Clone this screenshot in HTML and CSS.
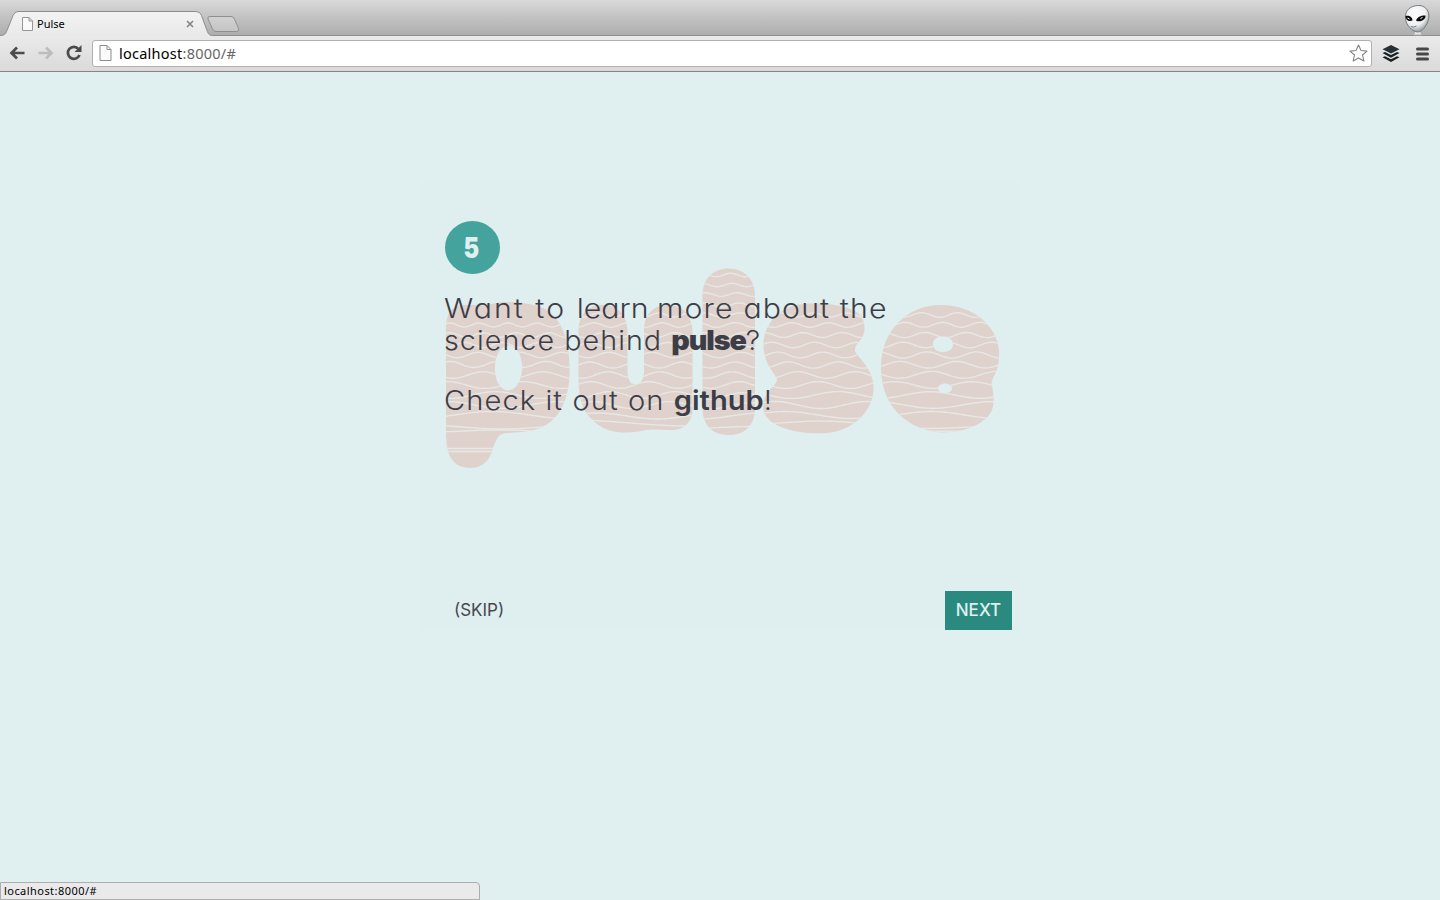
FILE: index.html
```html
<!DOCTYPE html>
<html lang="en">
<head>
<meta charset="utf-8">
<title>Pulse</title>
<link rel="stylesheet" href="styles.css">
</head>
<body>
<div class="browser">
  <header class="tabstrip">
    <div class="tabs">
      <svg class="tab-shapes" width="250" height="36" viewBox="0 0 250 36">
        <defs>
          <linearGradient id="tabfill" x1="0" y1="0" x2="0" y2="1"><stop offset="0" stop-color="#f3f3f3"/><stop offset="1" stop-color="#e9e9e9"/></linearGradient>
          <linearGradient id="newfill" x1="0" y1="0" x2="0" y2="1"><stop offset="0" stop-color="#d2d2d2"/><stop offset="1" stop-color="#c4c4c4"/></linearGradient>
        </defs>
        <path d="M0 35.5C5 35.5 6 33 7 30.500L13 15.500Q14.500 11.500 18 11.500H196Q200 11.500 201.500 15.500L207 30.500C208 33.500 209 35.500 213 35.500V36H0Z" fill="url(#tabfill)"/>
        <path d="M0 35.5C5 35.5 6 33 7 30.500L13 15.500Q14.500 11.500 18 11.500H196Q200 11.500 201.500 15.500L207 30.500C208 33.500 209 35.500 213 35.500H250" fill="none" stroke="#8d8d8d"/>
        <path d="M210 16.500H231Q233.500 16.500 234.500 19L238.500 28.500Q239.500 31.500 236.500 31.500H216Q213.500 31.500 212.500 29L208 19Q207 16.500 210 16.500Z" fill="url(#newfill)" stroke="#8f8f8f"/>
      </svg>
      <div class="tab">
        <svg width="11" height="14" viewBox="0 0 11 14"><path d="M.5.5H7L10.500 4V13.500H.5ZM7 .5V4H10.500" fill="#fafafa" stroke="#969696"/></svg>
        <span class="tab-title">Pulse</span>
        <svg width="8" height="8" viewBox="0 0 8 8"><path d="M1 1L7 7M7 1L1 7" stroke="#818181" stroke-width="1.500"/></svg>
      </div>
    </div>
    <svg class="alien" width="28" height="32" viewBox="0 0 28 32">
      <defs><radialGradient id="skin" cx=".4" cy=".3" r=".7"><stop offset="0" stop-color="#fff"/><stop offset=".65" stop-color="#edf0f1"/><stop offset="1" stop-color="#969c9f"/></radialGradient></defs>
      <path d="M11 27L9.500 31H18L16 26Z" fill="#e4e8e9" stroke="#aaa"/>
      <path d="M13.500 1.500C20.500 1 25 6 25 12C25 19 18.500 28 14 28C8.500 28 1.500 21 1.500 14C1 6 6.500 2 13.500 1.500Z" fill="url(#skin)" stroke="#777b7d"/>
      <path d="M1.500 12C5 11 8.500 13 8.500 16.500C5 18 1.500 16 1.500 12ZM12 16.500C13 13 18 11 21.500 11.500C22 15.500 16.500 19 12 16.500Z" fill="#0b0d0d"/>
      <path d="M3.500 14L5.500 15M16.500 14.500L18.500 13.500" stroke="#fff"/>
      <path d="M7 22.500Q9.500 24 12.500 22" fill="none" stroke="#68878e"/>
    </svg>
  </header>
  <nav class="toolbar">
    <svg class="back" width="16" height="14" viewBox="0 0 16 14"><path d="M8 1.500L2.500 7L8 12.500M2.500 7H15.500" fill="none" stroke="#4b4b4b" stroke-width="2.700"/></svg>
    <svg class="forward" width="16" height="14" viewBox="0 0 16 14"><path d="M8 1.500L13.500 7L8 12.500M13.500 7H.5" fill="none" stroke="#bdbdbd" stroke-width="2.700"/></svg>
    <svg class="reload" width="16" height="16" viewBox="0 0 16 16"><path d="M12.500 4A6 6 0 1 0 13.500 10" fill="none" stroke="#4b4b4b" stroke-width="2.700"/><path d="M15.500 0V7H8.500Z" fill="#4b4b4b"/></svg>
    <div class="address">
      <svg width="13" height="16" viewBox="0 0 13 16"><path d="M1 .5H8L12 4.500V15.500H1ZM8 .5V4.500H12" fill="#fafafa" stroke="#8c8c8c"/></svg>
      <span class="url"><span class="host">localhost</span>:8000/#</span>
      <svg width="19" height="18" viewBox="0 0 19 18"><path d="M9.500 1L12 6.500L18 7.100L13.500 11L14.900 17L9.500 13.900L4.100 17L5.500 11L1 7.100L7 6.500Z" fill="#fff" stroke="#858585" stroke-width="1.100" stroke-linejoin="round"/></svg>
    </div>
    <svg class="layers" width="18" height="18" viewBox="0 0 18 18"><path d="M9 0L17.500 4.300L9 8.600L.5 4.300Z" fill="#273034"/><path d="M.5 8L3 7L9 10L15 7L17.500 8L9 12.700ZM.5 12.300L3 11.300L9 14.300L15 11.300L17.500 12.300L9 17Z" fill="#182023"/></svg>
    <svg class="menu" width="13" height="14" viewBox="0 0 13 14"><path d="M1.500 2H11.500M1.500 7H11.500M1.500 12H11.500" stroke="#484848" stroke-width="3" stroke-linecap="round"/></svg>
  </nav>
  <main class="page">
    <section class="card">
      <svg class="wordmark" width="560" height="204" viewBox="443 266 560 204">
        <defs>
          <path id="p" d="M446 330C446 311 453 305 467 305C477 305 484 306 494 303.500C509 300 528 303 541 307C561 315 570 340 569.500 370C570 398 560 420 540 428C526 434 511 431 501 434.500C496 437 493 449 491 454C487 464 479 468 470 468C456 468 449 459 447 447C446 440 446 430 446 421ZM509 345.500C500 346 495 356 495 368C495 381 500 390 508 390.500C517 390 522 379 522 367C522 355 517 346 509 345.500Z"/>
          <path id="u" d="M578.500 331C578.500 315 588 305 602 305C618 305 627 315 627.500 331V371C627.500 379 630 384.500 635.500 384.500C641 384.500 644 379 644 371V330C644 315 653 305 668 305C684 305 692.500 317 692.500 332V409C692.500 421 685 429 674 430C666 430.500 652 428 641 431C625 434 608 433 597 424C581 411 578.500 398 578.500 376Z"/>
          <path id="l" d="M702.500 295C702.500 279 713 268.500 728.500 268.500C745 268.500 755 280 755 296V408C755 425 745 435 729 435C712 435 702.500 425 702.500 408Z"/>
          <path id="s" d="M763.500 344C764 324 779 309 796 305C815 302 843 303 858 313C865 318 866 330 863 336C860 342 855 344 855 350C855 356 873 366 873.500 387C874 409 856 426 838 431C824 435 798 434 781 427C766 421 762 411 763.500 406C762 393 777 385 777 380C777 374 763.500 367 763.500 344Z"/>
          <path id="e" d="M941 305C973 305 997 326 999 350C1000 371 994 373 991.500 383C993 390 995 402 992 410C988 420 973 430 951 432C935 434 918 429 906 420C889 408 881 389 881 367C881 333 905 305 941 305ZM943 336.500C936 336.500 933 340 933 344C933 349 937 352 943 352C949 352 953 349 953 344.500C953 340 949 336.500 943 336.500ZM945 383.500C941 383.500 938 386 938 388.500C938 391 941 393 945 393C949 393 952 391 952 388C952 386 949 383.500 945 383.500Z"/>
          <clipPath id="clip-p"><use href="#p" clip-rule="evenodd"/></clipPath>
          <clipPath id="clip-u"><use href="#u"/></clipPath>
          <clipPath id="clip-l"><use href="#l"/></clipPath>
          <clipPath id="clip-s"><use href="#s"/></clipPath>
          <clipPath id="clip-e"><use href="#e" clip-rule="evenodd"/></clipPath>
        </defs>
        <g class="letters"><use href="#p"/><use href="#u"/><use href="#l"/><use href="#s"/><use href="#e"/></g>
        <g class="waves" id="waves"></g>
      </svg>
      <div class="content">
        <div class="step"><span class="digit">5</span></div>
        <p class="message"><span class="line one"><span class="loose">Want to </span><span class="tight">learn </span>more about the</span><br><span class="line two">science behind <strong class="brand">pulse</strong>?</span></p>
        <p class="message"><span class="line three">Check it out on <b class="link">github</b>!</span></p>
      </div>
      <footer class="actions">
        <a class="skip">(SKIP)</a>
        <a class="next">NEXT</a>
      </footer>
    </section>
  </main>
  <div class="status">localhost:8000/#</div>
</div>
<script src="waves.js"></script>
</body>
</html>
```
FILE: styles.css
```css
* { box-sizing: border-box; }
body { margin: 0; background: #e0f0f0; overflow: hidden; }
svg { display: block; flex: none; }
.browser { height: 900px; display: flex; flex-direction: column; position: relative; font-family: "Noto Sans", sans-serif; }
.tabstrip { height: 36px; flex: none; display: flex; justify-content: space-between; background: linear-gradient(#d9d9d9 0, #c9c9c9 12px, #adadad 35px); border-bottom: 1px solid #8d8d8d; }
.tabs { position: relative; width: 250px; height: 36px; }
.tab-shapes { position: absolute; left: 0; top: 0; }
.tab { position: relative; display: flex; align-items: center; width: 194px; height: 26px; margin-top: 11px; padding-left: 22px; gap: 4px; }
.tab-title { flex: 1; font-size: 11px; line-height: 14px; color: #000; }
.alien { margin: 4px 8px 0 0; height: 32px; }
.toolbar { height: 36px; flex: none; display: flex; align-items: center; padding: 0 10px 1px 9px; background: linear-gradient(#eaeaea, #dadada); border-bottom: 1px solid #858585; }
.forward { margin-left: 13px; }
.reload { margin-left: 12px; }
.address { display: flex; align-items: center; width: 1280px; height: 27px; margin-left: 10px; padding: 0 3px 0 6px; background: #fff; border: 1px solid #b0b0b0; border-radius: 3px; }
.url { flex: 1; margin-left: 7px; font-size: 14.5px; line-height: 20px; letter-spacing: .25px; color: #666; }
.host { color: #000; }
.layers { margin: 2px 0 0 10px; }
.menu { margin: 1px 0 0 16px; }
.page { flex: 1; display: flex; justify-content: center; align-items: flex-start; padding-top: 108px; }
.card { position: relative; width: 600px; height: 450px; display: flex; flex-direction: column; justify-content: space-between; background: #dfefef; }
.wordmark { position: absolute; left: 23px; top: 86px; }
.letters { fill: #dfd2cc; fill-rule: evenodd; }
.waves { fill: none; stroke: #e7e8e5; stroke-width: 1.35; }
.content { position: relative; padding: 41px 25px 0; }
.step { width: 55px; height: 53px; border-radius: 50%; background: #45a39d; color: #dff0ef; font: 900 28px/55px Inter, sans-serif; text-align: center; }
.digit { display: inline-block; transform: translateX(-1px) scaleX(.84); }
.message { margin: 19px 0 0; color: #3d3d47; font: 300 27px/32px Inter, sans-serif; font-feature-settings: "cv11"; white-space: nowrap; }
.message + .message { margin-top: 28px; }
.line { display: inline-block; height: 32px; vertical-align: top; letter-spacing: 1px; transform-origin: left; }
.one { transform: translateX(-1px) scaleX(1.121); }
.two { transform: translateX(-1px) scaleX(1.062); }
.three { transform: translateX(-1px) scaleX(1.078); }
.loose { letter-spacing: 1.8px; }
.tight { letter-spacing: 0; }
.brand { font-weight: 900; letter-spacing: -1px; }
.link { font-weight: 600; letter-spacing: 0; }
.actions { position: relative; display: flex; justify-content: space-between; padding: 0 8px 0 25px; font: 400 17px/38px Inter, sans-serif; }
.skip { padding: 0 9px; color: #47474f; height: 39px; }
.next { width: 67px; height: 39px; text-align: center; font-weight: 500; color: #dff0ef; background: #2b8a80; }
.status { position: absolute; left: 0; bottom: 0; width: 480px; height: 18px; padding-left: 3px; background: #eaeaea; border: 1px solid #adadad; border-radius: 0 4px 0 0; font-size: 11px; line-height: 16px; letter-spacing: .45px; color: #000; }
```
FILE: waves.js
```javascript
// Each row: [center y, x of a crest, wavelength, amplitude]
const rows = {
  p: [[325,479,29,2],[335,483,33,2.3],[345,465,37,2.5],[355,478,42,2.7],[364.500,450,48,3],[375,483,60,3.300],[385,447,76,3.400],[395,495,90,3.400],[405,447,110,3.400],[415,492,150,3.500],[427,422,160,2],[431,500,140,1],[448.500,450,200,0],[451.500,450,200,0]],
  u: [[315,599,30,2],[325,594,34,2.300],[335,603,36,2.400],[345,590,39,2.500],[355,609,43,2.700],[365,590,46,3],[375,608,52,3.200],[385,591,58,3.300],[395,610,65,3.400],[405,670,77,3.400],[416,597,120,3],[423,570,240,3]],
  l: [[275,730.500,29,1.700],[285,732,30,1.700],[294.500,737,32,1.800],[305,739,34,2],[315,740,36,2.200],[325,735,37,2.400],[335,744,39,2.500],[345,733,41,2.500],[355,741,44,2.800],[365,735,48,3],[375,732,51,3.200],[385,739,56,3.300],[396,743,68,3.300],[406,752,90,3.200],[416,763,130,3],[428,755,180,1.500]],
  s: [[315,781,33,2],[325,791.700,37,2.300],[335,803,39,2.400],[345,771.700,43,2.700],[355,777.700,45,2.900],[365,788.300,50,3.100],[375,798,57,3.300],[385,818,65,3.400],[395,838,93,3.400],[405,775,92,3.500],[415,785,133,3.500],[422.500,820,130,1.400]],
  e: [[315,921.700,35.700,2.300],[324.800,905,37.500,2.400],[335,925,41.500,2.600],[345,903.300,44.300,2.800],[355,927.300,49,3.100],[364.700,900,56.700,3.300],[374.800,931.700,65,3.400],[385,895,77,3.300],[395,930,100,3.300],[405,991,115,3.300],[415,931,135,3.500],[427.500,995,140,1],[431.500,940,200,.3]]
};
const spans = { p: [444,572], u: [577,694], l: [701,757], s: [761,876], e: [879,1002] };
const ns = "http://www.w3.org/2000/svg";
for (const letter in rows) {
  const group = document.createElementNS(ns, "g");
  group.setAttribute("clip-path", `url(#clip-${letter})`);
  for (const [y, crest, length, amp] of rows[letter]) {
    let d = "";
    for (let x = spans[letter][0]; x <= spans[letter][1]; x += 2) {
      const level = y - amp * Math.cos((x - crest) / length * Math.PI * 2);
      d += `${d ? "L" : "M"}${x} ${level.toFixed(2)}`;
    }
    const path = document.createElementNS(ns, "path");
    path.setAttribute("d", d);
    group.appendChild(path);
  }
  document.getElementById("waves").appendChild(group);
}
```
